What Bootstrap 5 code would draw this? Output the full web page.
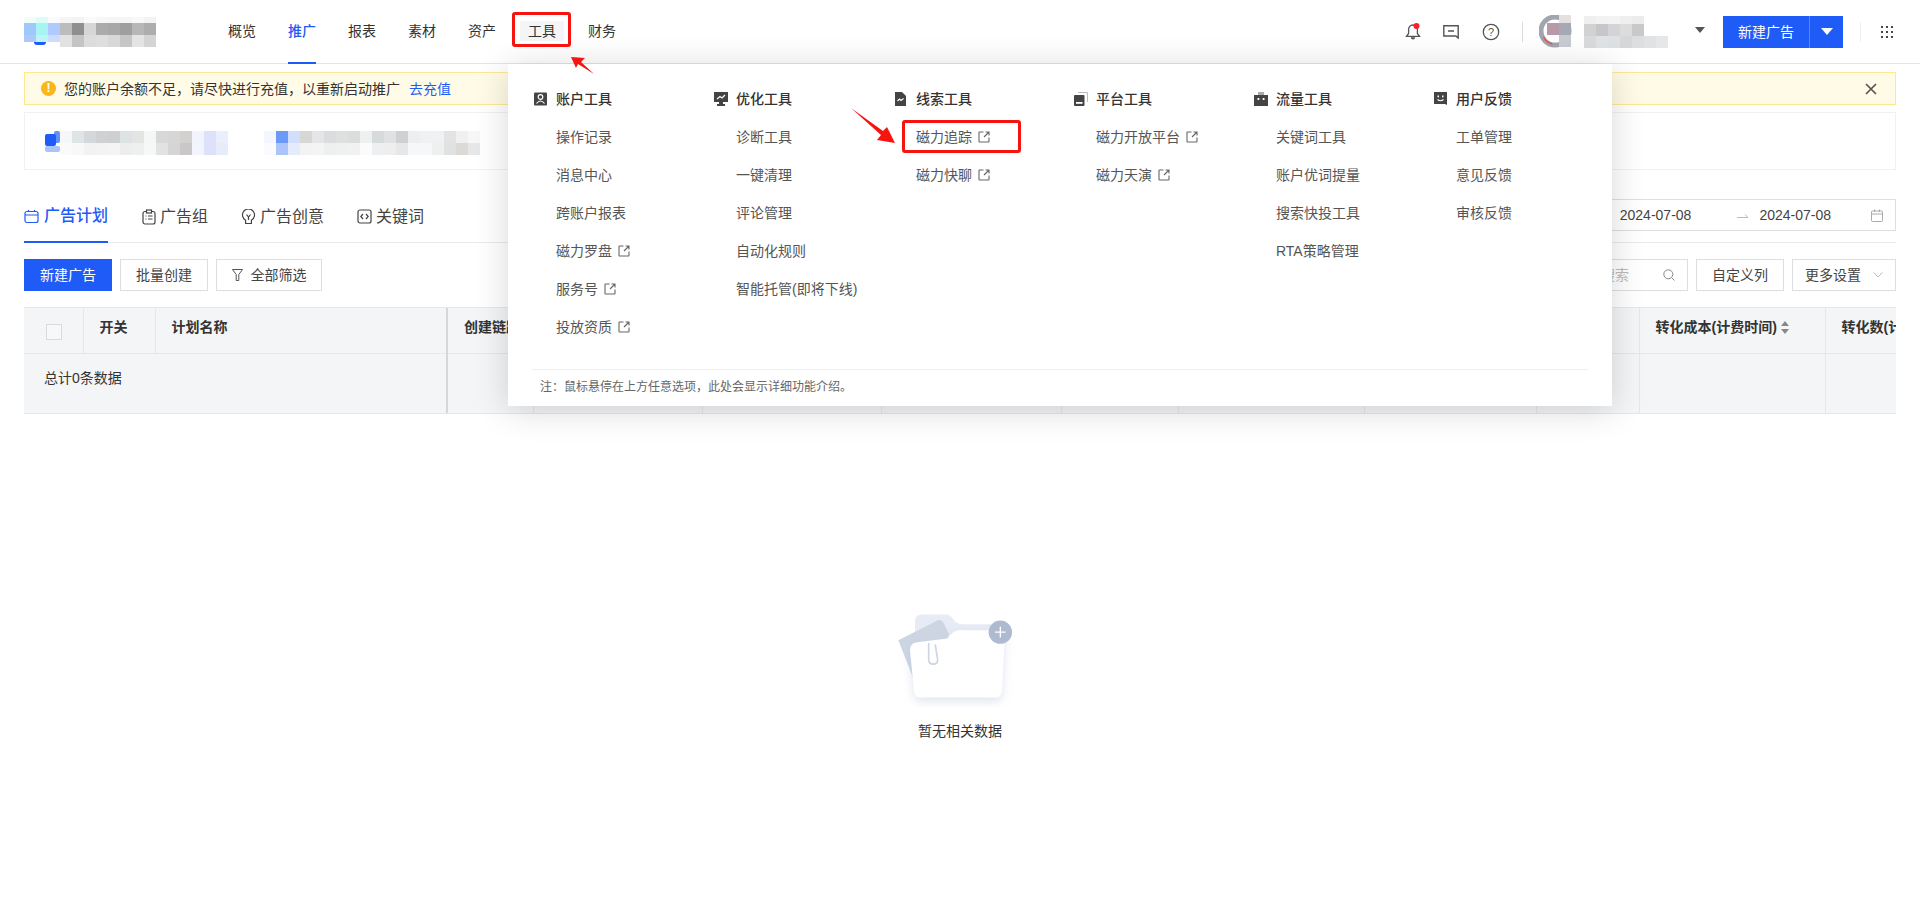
<!DOCTYPE html>
<html lang="zh-CN">
<head>
  <meta charset="UTF-8">
  <title>广告计划</title>
  <link href="https://cdn.jsdelivr.net/npm/bootstrap@5.3.3/dist/css/bootstrap.min.css" rel="stylesheet">
  <style>
    body {
      position: relative;
      width: 1920px;
      height: 923px;
      overflow: hidden;
      background: #fff;
      color: #333;
      font-family: "Liberation Sans", "Noto Sans CJK SC", sans-serif;
      font-size: 14px;
      line-height: 22px;
    }
    svg { display: block; flex-shrink: 0; }
    .ml-8 { margin-left: 8px; }
    .ml-11 { margin-left: 11px; }
    .ml-16 { margin-left: 16px; }
    .ml-17 { margin-left: 17px; }
    .ml-20 { margin-left: 20px; }
    .ml-22 { margin-left: 22px; }
    .ml-23 { margin-left: 23px; }
    .ml-27 { margin-left: 27px; }
    .ml-36 { margin-left: 36px; }
    .ml-40 { margin-left: 40px; }
    .ml-46 { margin-left: 46px; }

    .top-bar { height: 64px; padding: 0 27px 0 24px; border-bottom: 1px solid #e3e4e8; }
    .logo-box { position: relative; width: 132px; margin-right: 56px; }
    .logo-notch { position: absolute; left: 0; bottom: 0; width: 36px; height: 5px; background: #fff; }
    .logo-notch::after { content: ""; position: absolute; left: 10px; top: 0; width: 12px; height: 3px; background: #1f5bf6; border-radius: 0 0 5px 5px; }
    .mosaic-row { display: flex; }
    .mosaic-row span { width: 12px; flex-shrink: 0; }
    .user-name { width: 84px; }
    .caret-up { margin-bottom: 4px; }

    .main-nav { height: 63px; }
    .main-nav .nav-link { padding: 0 16px; height: 63px; line-height: 63px; color: #333; position: relative; }
    .main-nav .nav-link.on { color: #1f5bf6; font-weight: 500; }
    .main-nav .nav-link.on::after { content: ""; position: absolute; left: 16px; right: 16px; bottom: -1px; height: 2px; background: #1f5bf6; }
    .tool-hover { background: #f4f5f7; padding: 2px 8px; margin: 0 -8px; }

    .v-line { width: 1px; height: 20px; background: #d8dadd; }
    .v-line.faint { background: #eceef0; }
    .btn-split { height: 32px; width: 120px; margin-left: 18px; background: #1f5bf6; color: #fff; }
    .btn-split > span:first-child { width: 87px; border-right: 1px solid #5c86f8; line-height: 32px; text-align: center; }
    .btn-split > span:last-child { flex: 1; }

    .page-body { padding: 8px 24px 0; }
    .alert.low-money { height: 33px; margin: 0 0 7px; padding: 0 18px 0 16px; background: #fffbe6; border: 1px solid #fde992; border-radius: 0; color: #333; }
    .low-money a { color: #1f5bf6; text-decoration: none; margin-left: 9px; }
    .warn-dot { width: 15px; height: 15px; margin-right: 8px; border-radius: 50%; background: #fcb61d; color: #fff; font-size: 12px; line-height: 15px; font-weight: 700; text-align: center; }
    .card.acct-card { height: 58px; padding: 18px 0 0 20px; border: 1px solid #f0f1f4; border-radius: 0; flex-direction: row; }

    .tab-bar { height: 73px; border-bottom: 1px solid #e9eaed; }
    .plan-tabs .nav-link { display: flex; align-items: center; gap: 4px; height: 73px; padding: 34px 0 14px; margin-right: 33px; font-size: 16px; line-height: 24px; color: #444; }
    .plan-tabs .nav-link.on { color: #1f5bf6; font-weight: 500; gap: 5px; border-bottom: 2px solid #1f5bf6; padding-bottom: 13px; margin-right: 34px; }
    .date-box { width: 380px; height: 32px; border: 1px solid #dcdee2; margin-top: 29px; padding-right: 12px; color: #444; }

    .tool-row { padding-top: 16px; height: 64px; }
    .btn.plain-btn { height: 32px; width: 88px; margin-left: 8px; padding: 0; border: 1px solid #dcdee2; border-radius: 0; font-size: 14px; line-height: 30px; color: #444; background: #fff; }
    .btn.plain-btn.filter-btn { width: 106px; }
    .btn.plain-btn.more-btn { width: 104px; padding: 0 12px; }
    .btn.blue-btn { height: 32px; width: 88px; padding: 0; border: 0; border-radius: 0; font-size: 14px; line-height: 32px; color: #fff; background: #1f5bf6; }
    .search-box { width: 180px; height: 32px; border: 1px solid #dcdee2; color: #bbb; padding: 0 12px 0 92px; }

    .table-wrap { width: 1872px; overflow: hidden; border-top: 1px solid #e6e7ea; border-bottom: 1px solid #e6e7ea; }
    .table.ad-table { width: 1976px; margin: 0; table-layout: fixed; --bs-table-bg: #f4f5f7; color: #333; }
    .ad-table th, .ad-table td { padding: 8px 16px; background: #f4f5f7; border: 0; border-right: 1px solid #e6e7ea; white-space: nowrap; overflow: hidden; vertical-align: top; font-size: 14px; line-height: 22px; }
    .ad-table thead th { height: 45px; font-weight: 600; border-bottom: 1px solid #e6e7ea; }
    .ad-table tbody td { height: 60px; padding-top: 13px; }
    .ad-table tbody td.sum-cell { padding-left: 20px; }
    .ad-table .frozen-edge { border-right: 2px solid #d6d7da; }
    .ad-table col:nth-child(1) { width: 59px; }
    .ad-table col:nth-child(2) { width: 72px; }
    .ad-table col:nth-child(3) { width: 292px; }
    .ad-table col:nth-child(4) { width: 86px; }
    .ad-table col:nth-child(5) { width: 169px; }
    .ad-table col:nth-child(6) { width: 179px; }
    .ad-table col:nth-child(7) { width: 180px; }
    .ad-table col:nth-child(8) { width: 117px; }
    .ad-table col:nth-child(9) { width: 186px; }
    .ad-table col:nth-child(10) { width: 172px; }
    .ad-table col:nth-child(11) { width: 103px; }
    .ad-table col:nth-child(12) { width: 186px; }
    .ad-table col:nth-child(13) { width: 175px; }
    .tick-box { width: 16px; height: 16px; margin: 8px 0 0 6px; border: 1px solid #d9dbdf; background: #f7f8f9; }

    .empty-zone { padding-top: 196px; }
    .empty-zone p { margin: 13px 0 0; color: #333; }

    .tool-panel { position: absolute; left: 508px; top: 64px; width: 1104px; height: 342px; background: #fff; box-shadow: 0 4px 32px rgba(0, 0, 0, .16); z-index: 5; padding: 24px 24px 0 26px; }
    .tool-col { width: 180px; flex-shrink: 0; }
    .tool-head { display: flex; align-items: center; gap: 8px; height: 22px; font-weight: 500; color: #333; }
    .tool-item { display: flex; align-items: center; gap: 6px; height: 22px; margin-top: 16px; padding-left: 22px; color: #555; }
    .tool-note { margin: 0 0 0 -2px; width: 1056px; height: 37px; padding: 8px 0 0 8px; border-top: 1px solid #eeeff1; font-size: 12px; line-height: 18px; color: #666; }

    .mark-box { position: absolute; border: 3px solid #f5140f; border-radius: 3px; z-index: 7; }
    .mark-nav { left: 512px; top: 12px; width: 59px; height: 35px; }
    .mark-item { left: 902px; top: 120px; width: 119px; height: 33px; }
    .mark-arrows { position: absolute; left: 0; top: 0; z-index: 7; }
  </style>
</head>
<body>
<svg width="0" height="0" class="position-absolute">
  <symbol id="out" viewBox="0 0 12 12"><path d="M5.5 1H1.500Q1 1 1 1.500V10.500Q1 11 1.500 11H10.500Q11 11 11 10.500V6.500M7.500 1H11V4.500M11 1L6 6" fill="none" stroke="#666" stroke-width="1.100"/></symbol>
</svg>

<header class="top-bar d-flex align-items-center">
  <div class="logo-box" data-mosaic="6:#f0fdfb,#dcfcf7,#fafbff,#f5f5f5,#f3f3f3,#fafafa,#f7f7f7,#f5f5f5,#f5f5f5,#f8f8f8,#f3f3f3|12:#a0c9fb,#a8f4f2,#afcafc,#bcbcbc,#8f8f8f,#d6d6d6,#ababab,#a8a8a8,#9f9f9f,#b7b7b7,#adadad|12:#afc8fc,#bff4f4,#ccdcfd,#e2e2e2,#c4c4c4,#dcdcdc,#dedede,#d8d8d8,#c6c6c6,#e4e4e4,#d4d4d4"><span class="logo-notch"></span></div>
  <nav class="nav main-nav">
    <a class="nav-link" href="#">概览</a>
    <a class="nav-link on" href="#">推广</a>
    <a class="nav-link" href="#">报表</a>
    <a class="nav-link" href="#">素材</a>
    <a class="nav-link" href="#">资产</a>
    <a class="nav-link" href="#"><span class="tool-hover">工具</span></a>
    <a class="nav-link" href="#">财务</a>
  </nav>
  <div class="ms-auto d-flex align-items-center">
    <svg width="16" height="17" viewBox="0 0 16 17"><path d="M8 2C5.2 2 3.6 4.2 3.6 6.5V10.500L1.500 13.300H14.500L12.400 10.500V6.500C12.400 4.200 10.800 2 8 2Z" fill="none" stroke="#555" stroke-width="1.300"/><path d="M5.800 14.300a2.200 2.200 0 0 0 4.400 0Z" fill="#555"/><circle cx="11.500" cy="3" r="3" fill="#f5222d"/></svg>
    <svg class="ml-22" width="16" height="14" viewBox="0 0 16 14"><path d="M.8.800H15.200V13L12.800 11H.8ZM5 6H11" fill="none" stroke="#555" stroke-width="1.400"/></svg>
    <svg class="ml-23" width="18" height="18" viewBox="0 0 18 18"><circle cx="9" cy="9" r="7.700" fill="none" stroke="#555" stroke-width="1.300"/><text x="9" y="13" font-size="11" text-anchor="middle" fill="#555" font-family="Liberation Sans">?</text></svg>
    <span class="v-line ml-22"></span>
    <svg class="ml-16" width="34" height="33" viewBox="0 0 34 33"><circle cx="16" cy="16" r="14" fill="#fff" stroke="#a2a5ad" stroke-width="5"/><path d="M4.500 22a13 13 0 0 0 9 7" fill="none" stroke="#e5554a" stroke-width="1.500"/><rect x="20" y="0" width="12" height="8" fill="#e5dfe0"/><rect x="8" y="8" width="12" height="12" fill="#b998a8"/><rect x="20" y="8" width="12" height="12" fill="#a6a8b3"/><rect x="20" y="20" width="12" height="12" fill="#c9cbd2"/></svg>
    <div class="user-name ml-11" data-mosaic="8:#efefef,#f2f2f2,#f3f3f3,#efefef,#ececec|12:#d2d2d2,#c8c6cc,#d4d4d6,#dcdcdc,#c8c9cb|12:#d8dadc,#dfe3e6,#dee1e3,#d5d7d9,#dcdee0,#e0e2e4,#e6e7e9"></div>
    <svg class="caret-up ml-27" width="10" height="6" viewBox="0 0 10 6"><path d="M0 0H10L5 6Z" fill="#555"/></svg>
    <div class="btn-split d-flex align-items-center">
      <span>新建广告</span>
      <span class="d-flex justify-content-center"><svg width="12" height="7" viewBox="0 0 12 7"><path d="M0 0H12L6 7Z" fill="#fff"/></svg></span>
    </div>
    <span class="v-line faint ml-17"></span>
    <svg class="ml-20" width="12" height="12" viewBox="0 0 12 12" fill="#444"><rect width="2" height="2"/><rect x="5" width="2" height="2"/><rect x="10" width="2" height="2"/><rect y="5" width="2" height="2"/><rect x="5" y="5" width="2" height="2"/><rect x="10" y="5" width="2" height="2"/><rect y="10" width="2" height="2"/><rect x="5" y="10" width="2" height="2"/><rect x="10" y="10" width="2" height="2"/></svg>
  </div>
</header>

<main class="page-body">
  <div class="alert low-money d-flex align-items-center" role="alert">
    <span class="warn-dot">!</span>
    <span>您的账户余额不足，请尽快进行充值，以重新启动推广</span>
    <a href="#">去充值</a>
    <svg class="ms-auto" width="12" height="12" viewBox="0 0 12 12"><path d="M1 1L11 11M11 1L1 11" stroke="#555" stroke-width="1.700"/></svg>
  </div>

  <div class="card acct-card">
    <svg width="15" height="21" viewBox="0 0 15 21"><rect x="9" width="6" height="12" rx="2" fill="#5f8ff7"/><rect y="3" width="11" height="12" rx="2" fill="#1f5bf6"/><rect y="15" width="15" height="6" rx="2" fill="#a8c4fb"/></svg>
    <div data-mosaic="12:#f5f7f9,#dfe4e7,#d5d8da,#cfd1d3,#cdcfd1,#dde2e4,#e3e5e5,#f5f6f6,#d8d8d8,#d6d6d6,#d3d0d0,#f1f3fd,#dde2fa,#eaeffb|12:#fafafa,#f8f8f8,#f2f2f2,#f3f3f3,#f4f4f4,#eceded,#eeefef,#f6f7f7,#e2e2e2,#d5d5d7,#c9c7c7,#f3f4fd,#dde2fa,#e7ecfb"></div>
    <div class="ml-36" data-mosaic="12:#f3f6fe,#6c98f7,#d1defd,#d7d7d6,#e4e5e6,#dbdcde,#dee0e0,#dadcde,#eeefef,#d7dadc,#e0e1e2,#cfd0d2,#eceef2,#eff1f2,#f0f1f2,#e2e3e3,#f0f0f0,#f7f7f7|12:#f9fbff,#abc5fb,#e3ebfd,#f3f3f3,#f3f4f4,#eeefef,#eff0f0,#f1f1f1,#fbfbfb,#eeeff0,#eeeeef,#e6e7e8,#f6f7f8,#f6f7f8,#eeefef,#e0e2e2,#dbdad6,#e6e7e8"></div>
  </div>

  <div class="tab-bar d-flex justify-content-between">
    <nav class="nav plan-tabs">
      <a class="nav-link on" href="#">
        <svg width="15" height="15" viewBox="0 0 15 15" fill="none" stroke="#1f5bf6" stroke-width="1.200"><rect x="1" y="2.500" width="13" height="11" rx="2"/><path d="M1 6H14M4.500 1V3M10.500 1V3"/></svg>广告计划</a>
      <a class="nav-link" href="#">
        <svg width="14" height="16" viewBox="0 0 14 16" fill="none" stroke="#444" stroke-width="1.200"><rect x="1" y="2.500" width="12" height="12.500" rx="2"/><rect x="4.500" y="1" width="5" height="3" fill="#fff"/><path d="M3.500 7H4.500M3.500 10H4.500M6 7H10.500M6 10H10.500"/></svg>广告组</a>
      <a class="nav-link" href="#">
        <svg width="15" height="16" viewBox="0 0 15 16" fill="none" stroke="#444" stroke-width="1.200"><path d="M4.600 11.200A6 6 0 1 1 10.400 11.200V14.500H4.600Z"/><path d="M5.500 5.500L7.500 8L9.500 5.500M7.500 8V11"/></svg>广告创意</a>
      <a class="nav-link" href="#">
        <svg width="15" height="15" viewBox="0 0 15 15" fill="none" stroke="#444" stroke-width="1.200"><rect x="1" y="1" width="13" height="13" rx="2"/><path d="M6 5L3.800 7.500L6 10M9 5L11.200 7.500L9 10"/></svg>关键词</a>
    </nav>
    <div class="date-box d-flex align-items-center justify-content-end">
      <span>2024-07-08</span>
      <svg class="ml-46" width="11" height="5" viewBox="0 0 11 5"><path d="M0 4.500H11L8 1.500" fill="none" stroke="#bbb"/></svg>
      <span class="ml-11">2024-07-08</span>
      <svg class="ml-40" width="12" height="13" viewBox="0 0 12 13" fill="none" stroke="#aaa"><rect x=".5" y="2" width="11" height="10.500" rx="1"/><path d="M.5 5H11.500M3.500 .5V3M8.500 .5V3"/></svg>
    </div>
  </div>

  <div class="tool-row d-flex">
    <button class="btn blue-btn" type="button">新建广告</button>
    <button class="btn plain-btn" type="button">批量创建</button>
    <button class="btn plain-btn filter-btn d-flex align-items-center justify-content-center gap-2" type="button">
      <svg width="11" height="12" viewBox="0 0 11 12" fill="none" stroke="#555"><path d="M.5.500H10.500L6.800 5.500V11.500H4.200V5.500Z"/></svg>全部筛选</button>
    <div class="search-box ms-auto d-flex align-items-center justify-content-between">
      <span>搜索</span>
      <svg width="12" height="12" viewBox="0 0 12 12" fill="none" stroke="#888"><circle cx="5.300" cy="5.300" r="4.500"/><path d="M8.700 8.700L11.500 11.500"/></svg>
    </div>
    <button class="btn plain-btn" type="button">自定义列</button>
    <button class="btn plain-btn more-btn d-flex align-items-center justify-content-between" type="button">更多设置<svg width="10" height="6" viewBox="0 0 10 6" fill="none" stroke="#bbb"><path d="M.5 .5L5 5L9.500 .5"/></svg></button>
  </div>

  <div class="table-wrap">
    <table class="table ad-table">
      <colgroup><col><col><col><col><col><col><col><col><col><col><col><col><col></colgroup>
      <thead>
        <tr>
          <th><div class="tick-box"></div></th>
          <th>开关</th>
          <th class="frozen-edge">计划名称</th>
          <th>创建链路</th>
          <th></th><th></th><th></th><th></th><th></th><th></th><th></th>
          <th><span class="d-flex align-items-center gap-1">转化成本(计费时间)<svg width="8" height="13" viewBox="0 0 8 13" fill="#888"><path d="M4 0L8 5H0ZM4 13L0 8H8Z"/></svg></span></th>
          <th>转化数(计费时间)</th>
        </tr>
      </thead>
      <tbody>
        <tr>
          <td colspan="3" class="frozen-edge sum-cell">总计0条数据</td>
          <td></td><td></td><td></td><td></td><td></td><td></td><td></td><td></td><td></td><td></td>
        </tr>
      </tbody>
    </table>
  </div>

  <div class="empty-zone d-flex flex-column align-items-center">
    <svg width="140" height="97" viewBox="90 60 420 290">
      <defs><filter id="soft" x="-30%" y="-30%" width="160%" height="170%"><feDropShadow dx="0" dy="12" stdDeviation="14" flood-color="#b9c3da" flood-opacity=".45"/></filter></defs>
      <path d="M165 95Q165 73 187 73H255Q272 73 280 88Q290 102 305 102H415V200H165Z" fill="#e6ebf5"/>
      <path d="M115 150L232 91Q243 87 250 97L266 130L250 300L160 265Z" fill="#cdd5e3"/>
      <path d="M150 180Q150 158 172 156L262 145Q282 118 305 120H435L426 300Q426 322 404 322H184Q162 322 162 300Z" fill="#fff" filter="url(#soft)"/>
      <path d="M206 160V208Q206 222 220 222Q233 222 233 208L226 165" fill="none" stroke="#cdd5e3" stroke-width="5" stroke-linecap="round"/>
      <circle cx="421" cy="126" r="35" fill="#adbacf"/>
      <path d="M421 110V142M405 126H437" stroke="#fff" stroke-width="4"/>
    </svg>
    <p>暂无相关数据</p>
  </div>
</main>

<section class="tool-panel d-flex flex-column">
  <div class="d-flex flex-grow-1">
    <div class="tool-col">
      <div class="tool-head"><svg width="14" height="14" viewBox="0 0 14 14"><rect y=".5" width="13" height="13" rx="1" fill="#444"/><circle cx="6.500" cy="5" r="2.300" fill="none" stroke="#fff" stroke-width="1.200"/><path d="M2.500 11.500Q6.500 6.500 10.500 11.500" fill="none" stroke="#fff" stroke-width="1.200"/></svg>账户工具</div>
      <a class="tool-item text-decoration-none">操作记录</a>
      <a class="tool-item text-decoration-none">消息中心</a>
      <a class="tool-item text-decoration-none">跨账户报表</a>
      <a class="tool-item text-decoration-none">磁力罗盘<svg width="12" height="12"><use href="#out"/></svg></a>
      <a class="tool-item text-decoration-none">服务号<svg width="12" height="12"><use href="#out"/></svg></a>
      <a class="tool-item text-decoration-none">投放资质<svg width="12" height="12"><use href="#out"/></svg></a>
    </div>
    <div class="tool-col">
      <div class="tool-head"><svg width="14" height="14" viewBox="0 0 14 14"><path d="M0 0H14V10H9V12H11V14H3V12H5V10H0Z" fill="#444"/><path d="M3 7L6 4.500L8 6L11 3" fill="none" stroke="#fff" stroke-width="1.200"/></svg>优化工具</div>
      <a class="tool-item text-decoration-none">诊断工具</a>
      <a class="tool-item text-decoration-none">一键清理</a>
      <a class="tool-item text-decoration-none">评论管理</a>
      <a class="tool-item text-decoration-none">自动化规则</a>
      <a class="tool-item text-decoration-none">智能托管(即将下线)</a>
    </div>
    <div class="tool-col">
      <div class="tool-head"><svg width="14" height="14" viewBox="0 0 14 14"><path d="M1 0H8L12 4V14H1Z" fill="#444"/><path d="M3.500 9L5.500 7L7 8.500L9.500 6.500" fill="none" stroke="#fff" stroke-width="1.200"/></svg>线索工具</div>
      <a class="tool-item text-decoration-none">磁力追踪<svg width="12" height="12"><use href="#out"/></svg></a>
      <a class="tool-item text-decoration-none">磁力快聊<svg width="12" height="12"><use href="#out"/></svg></a>
    </div>
    <div class="tool-col">
      <div class="tool-head"><svg width="14" height="14" viewBox="0 0 14 14"><path d="M4 .5H13.500V10" fill="none" stroke="#bbb"/><rect y="3" width="10.500" height="11" rx="1" fill="#444"/><rect x="2" y="10" width="6.500" height="1.800" fill="#fff"/></svg>平台工具</div>
      <a class="tool-item text-decoration-none">磁力开放平台<svg width="12" height="12"><use href="#out"/></svg></a>
      <a class="tool-item text-decoration-none">磁力天演<svg width="12" height="12"><use href="#out"/></svg></a>
    </div>
    <div class="tool-col">
      <div class="tool-head"><svg width="14" height="14" viewBox="0 0 14 14"><rect x="4" y="0" width="6" height="3" fill="#aaa"/><path d="M0 3H14V14H0Z" fill="#444"/><rect x="3.500" y="6" width="1.800" height="2" fill="#fff"/><rect x="8.700" y="6" width="1.800" height="2" fill="#fff"/></svg>流量工具</div>
      <a class="tool-item text-decoration-none">关键词工具</a>
      <a class="tool-item text-decoration-none">账户优词提量</a>
      <a class="tool-item text-decoration-none">搜索快投工具</a>
      <a class="tool-item text-decoration-none">RTA策略管理</a>
    </div>
    <div class="tool-col">
      <div class="tool-head"><svg width="14" height="14" viewBox="0 0 14 14"><path d="M0 0H13V13L11 12H0Z" fill="#444"/><rect x="3.500" y="3.500" width="1.500" height="1.800" fill="#fff"/><rect x="8" y="3.500" width="1.500" height="1.800" fill="#fff"/><path d="M3.500 7.500Q6.500 10 9.500 7.500" fill="none" stroke="#fff" stroke-width="1.100"/></svg>用户反馈</div>
      <a class="tool-item text-decoration-none">工单管理</a>
      <a class="tool-item text-decoration-none">意见反馈</a>
      <a class="tool-item text-decoration-none">审核反馈</a>
    </div>
  </div>
  <div class="tool-note">注：鼠标悬停在上方任意选项，此处会显示详细功能介绍。</div>
</section>

<!-- red annotations on top of the shot -->
<div class="mark-box mark-nav"></div>
<div class="mark-box mark-item"></div>
<svg class="mark-arrows" width="1920" height="200">
  <polygon points="571,57 585,58 581,62 594,74 578,64 576,68" fill="#f5140f"/>
  <polygon points="851,108 883,131 887,127 895,143 877,140 881,135" fill="#f5140f"/>
</svg>

<script src="https://cdn.jsdelivr.net/npm/bootstrap@5.3.3/dist/js/bootstrap.bundle.min.js"></script>
<script>
// blurred-out names: "height:colour,colour|height:colour,..."
document.querySelectorAll('[data-mosaic]').forEach(function (box) {
  box.dataset.mosaic.split('|').forEach(function (row) {
    const parts = row.split(':');
    const line = document.createElement('div');
    line.className = 'mosaic-row';
    line.style.height = parts[0] + 'px';
    parts[1].split(',').forEach(function (c) {
      const cell = document.createElement('span');
      cell.style.background = c;
      line.appendChild(cell);
    });
    box.appendChild(line);
  });
});
</script>
</body>
</html>
